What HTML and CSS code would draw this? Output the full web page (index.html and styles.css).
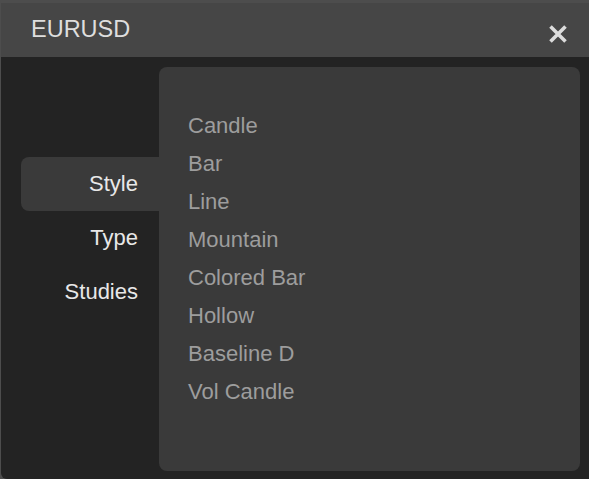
FILE: index.html
```html
<!DOCTYPE html>
<html>
<head>
<meta charset="utf-8">
<link rel="stylesheet" href="styles.css">
</head>
<body>
<div class="window">
  <div class="header">
    <span class="title">EURUSD</span>
    <svg class="close" width="20" height="20" viewBox="0 0 20 20"><path d="M2.5 2.5 L17.5 17.5 M17.5 2.5 L2.5 17.5" stroke="#dcdcdc" stroke-width="3.6" stroke-linecap="butt"/></svg>
  </div>
  <div class="content">
    <div class="tabs">
      <div class="tab active">Style</div>
      <div class="tab">Type</div>
      <div class="tab">Studies</div>
    </div>
    <div class="panel">
      <div class="item">Candle</div>
      <div class="item">Bar</div>
      <div class="item">Line</div>
      <div class="item">Mountain</div>
      <div class="item">Colored Bar</div>
      <div class="item">Hollow</div>
      <div class="item">Baseline D</div>
      <div class="item">Vol Candle</div>
    </div>
  </div>
</div>
</body>
</html>
```
FILE: styles.css
```css
html, body {
  margin: 0;
  padding: 0;
  width: 589px;
  height: 479px;
  overflow: hidden;
  background: #4d4d4d;
  font-family: "Liberation Sans", Arial, sans-serif;
}
.window {
  margin: 3px 0 0 1px;
  width: 588px;
  height: 476px;
  background: #232323;
  border-radius: 0 0 0 6px;
  display: flex;
  flex-direction: column;
}
.header {
  height: 54px;
  background: #464646;
  display: flex;
  align-items: center;
  justify-content: space-between;
  padding: 0 21px 0 30px;
  flex: none;
}
.title {
  color: #dedede;
  font-size: 23.5px;
  margin-top: -1px;
}
.close {
  display: block;
  margin-top: 7px;
}
.content {
  flex: 1;
  display: flex;
}
.tabs {
  width: 138px;
  padding: 100px 0 0 20px;
  display: flex;
  flex-direction: column;
}
.tab {
  height: 54px;
  line-height: 54px;
  text-align: right;
  padding-right: 21px;
  color: #e8e8e8;
  font-size: 22px;
  border-radius: 8px 0 0 8px;
}
.tab.active {
  background: #3a3a3a;
}
.panel {
  flex: 1;
  margin: 10px 9px 8px 0;
  background: #3a3a3a;
  border-radius: 8px;
  padding: 40px 0 0 29px;
}
.item {
  height: 38px;
  line-height: 38px;
  color: #9d9d9d;
  font-size: 22px;
}
```
